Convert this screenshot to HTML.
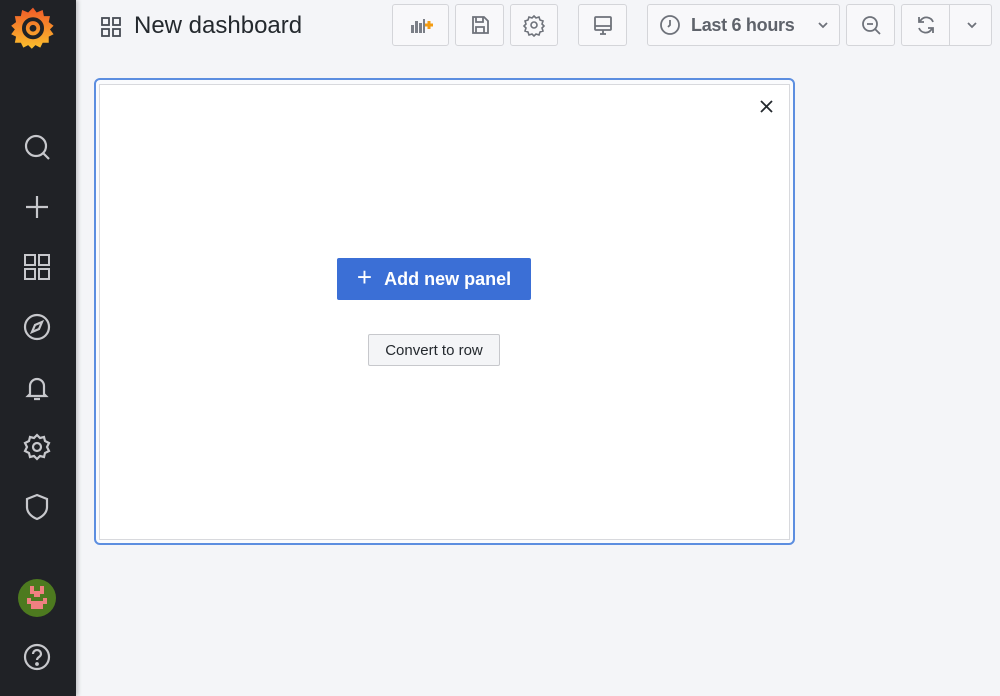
<!DOCTYPE html><html><head><style>
body{margin:0;width:1000px;height:696px;background:#f4f5f8;font-family:"Liberation Sans",sans-serif;position:relative;overflow:hidden}
.sb{position:absolute;left:0;top:0;width:76px;height:696px;background:#202226;box-shadow:2px 0 4px rgba(0,0,0,.2)}
.ic{position:absolute;left:18px;width:38px;height:38px}
.btn{position:absolute;top:4px;height:42px;border:1px solid #d4d5d9;border-radius:3px;background:#f8f8fa;box-sizing:border-box;display:flex;align-items:center;justify-content:center}
.btn svg{width:24px;height:24px}
</style></head><body>
<div class="sb">
<svg style="position:absolute;left:10px;top:4px" width="46" height="46" viewBox="0 0 38 38"><defs><linearGradient id="g" x1="0" y1="1" x2="0" y2="0"><stop offset="0" stop-color="#fbc02d"/><stop offset="1" stop-color="#f05a28"/></linearGradient></defs>
<path fill="url(#g)" d="M19 3l3 4 5-2 1 5 5 0-1 5 4 3-3 3 3 4-4 2 0 5-5 0-2 4-4-2-3 3-3-3-4 2-2-4-5 0 1-5-4-2 3-4-3-3 4-3-1-5 5 0 1-5 5 2z"/>
<circle cx="19" cy="20" r="7.5" fill="none" stroke="#202226" stroke-width="3.2"/><circle cx="19" cy="20" r="2.8" fill="#202226"/></svg>
<svg class="ic" style="top:128px" viewBox="0 0 38 38" fill="none" stroke="#c7c8cc" stroke-width="2.2"><circle cx="18" cy="18" r="10"/><path d="M25 25l6 6"/></svg>
<svg class="ic" style="top:188px" viewBox="0 0 38 38" fill="none" stroke="#c7c8cc" stroke-width="2.2"><path d="M19 8v22M8 19h22"/></svg>
<svg class="ic" style="top:248px" viewBox="0 0 38 38" fill="none" stroke="#c7c8cc" stroke-width="2"><rect x="7" y="7" width="10" height="10"/><rect x="21" y="7" width="10" height="10"/><rect x="7" y="21" width="10" height="10"/><rect x="21" y="21" width="10" height="10"/></svg>
<svg class="ic" style="top:308px" viewBox="0 0 38 38" fill="none" stroke="#c7c8cc" stroke-width="2.2"><circle cx="19" cy="19" r="12"/><path d="M24 14l-3 7-7 3 3-7z"/></svg>
<svg class="ic" style="top:368px" viewBox="0 0 38 38" fill="none" stroke="#c7c8cc" stroke-width="2.2"><path d="M12 26V18a7 7 0 0114 0v8l2 2H10zM16 31h6"/></svg>
<svg class="ic" style="top:428px" viewBox="0 0 38 38" fill="none" stroke="#c7c8cc" stroke-width="2.2"><circle cx="19" cy="19" r="4"/><path d="M19 7l3 3 4-1 1 4 4 2-2 4 2 4-4 2-1 4-4-1-3 3-3-3-4 1-1-4-4-2 2-4-2-4 4-2 1-4 4 1z"/></svg>
<svg class="ic" style="top:488px" viewBox="0 0 38 38" fill="none" stroke="#c7c8cc" stroke-width="2.2"><path d="M19 7l10 4v8c0 6-5 10-10 12-5-2-10-6-10-12v-8z"/></svg>
<svg class="ic" style="top:579px" viewBox="0 0 38 38"><circle cx="19" cy="19" r="19" fill="#4d7a1f"/><path fill="#f08080" d="M12 7h4v5h6V7h4v8h-4v3h-6v-3h-4zM9 19h4v3h12v-3h4v6h-4v5h-12v-5h-4zM16 24h6v2h-6z"/></svg>
<svg class="ic" style="top:638px" viewBox="0 0 38 38" fill="none" stroke="#c7c8cc" stroke-width="2.2"><circle cx="19" cy="19" r="12"/><path d="M15 16a4 4 0 118 0c0 3-4 3-4 6"/><circle cx="19" cy="26" r=".8" fill="#c7c8cc"/></svg>
</div>
<svg style="position:absolute;left:100px;top:16px" width="22" height="22" viewBox="0 0 22 22" fill="none" stroke="#464c54" stroke-width="1.8"><rect x="2" y="2" width="7" height="7"/><rect x="13" y="2" width="7" height="7"/><rect x="2" y="13" width="7" height="7"/><rect x="13" y="13" width="7" height="7"/></svg>
<div style="position:absolute;left:134px;top:12px;font-size:24px;color:#24292e">New dashboard</div>
<div class="btn" style="left:392px;width:57px"><svg viewBox="0 0 24 24"><g fill="#7b7f87"><rect x="2" y="12" width="3" height="8"/><rect x="6" y="8" width="3" height="12"/><rect x="10" y="10" width="3" height="10"/><rect x="14" y="6" width="2" height="14"/></g><path d="M20 8v8M16 12h8" stroke="#f39c12" stroke-width="3"/></svg></div>
<div class="btn" style="left:455px;width:49px"><svg viewBox="0 0 24 24" fill="none" stroke="#6e727a" stroke-width="1.8"><path d="M5 4h11l4 4v12H5zM8 4v5h7V4M8 20v-6h8v6"/></svg></div>
<div class="btn" style="left:510px;width:48px"><svg viewBox="0 0 24 24" fill="none" stroke="#6e727a" stroke-width="1.6"><circle cx="12" cy="12" r="3"/><path d="M12 3l2 2 3-1 1 3 3 1-1 3 2 2-2 2 1 3-3 1-1 3-3-1-2 2-2-2-3 1-1-3-3-1 1-3-2-2 2-2-1-3 3-1 1-3 3 1z"/></svg></div>
<div class="btn" style="left:578px;width:49px"><svg viewBox="0 0 24 24" fill="none" stroke="#6e727a" stroke-width="1.8"><rect x="4" y="4" width="16" height="13" rx="1"/><path d="M4 13h16M9 21h6M12 17v4"/></svg></div>
<div class="btn" style="left:647px;width:193px;justify-content:flex-start;padding-left:10px"><svg viewBox="0 0 24 24" fill="none" stroke="#6e727a" stroke-width="1.8"><circle cx="12" cy="12" r="9"/><path d="M12 7v5l-2 2"/></svg><span style="font-size:18px;color:#5f636b;margin-left:9px;font-weight:bold;letter-spacing:-0.3px">Last 6 hours</span><svg style="position:absolute;right:8px;width:16px" viewBox="0 0 16 16" fill="none" stroke="#6e727a" stroke-width="1.8"><path d="M4 6l4 4 4-4"/></svg></div>
<div class="btn" style="left:846px;width:49px"><svg viewBox="0 0 24 24" fill="none" stroke="#6e727a" stroke-width="1.8"><circle cx="11" cy="11" r="7"/><path d="M16 16l5 5M8 11h6"/></svg></div>
<div class="btn" style="left:901px;width:91px;justify-content:flex-start"><div style="width:47px;height:40px;display:flex;align-items:center;justify-content:center;border-right:1px solid #d4d5d9"><svg viewBox="0 0 24 24" fill="none" stroke="#6e727a" stroke-width="1.8" width="24" height="24"><path d="M19 9a7 7 0 00-12-2L5 9M5 15a7 7 0 0012 2l2-2M5 4v5h5M19 20v-5h-5"/></svg></div><svg style="width:16px;margin-left:14px" viewBox="0 0 16 16" fill="none" stroke="#6e727a" stroke-width="1.8"><path d="M4 6l4 4 4-4"/></svg></div>
<div style="position:absolute;left:94px;top:78px;width:701px;height:467px;box-sizing:border-box;border:2px solid #5c8ee0;border-radius:6px;background:#fafbfd"></div>
<div style="position:absolute;left:99px;top:84px;width:691px;height:456px;box-sizing:border-box;border:1px solid #d8d9dd;background:#fff"></div>
<svg style="position:absolute;left:759px;top:99px" width="15" height="15" viewBox="0 0 15 15" stroke="#24292e" stroke-width="1.8"><path d="M2 2l11 11M13 2L2 13"/></svg>
<div style="position:absolute;left:337px;top:258px;width:194px;height:42px;background:#3b6fd6;border-radius:2px;color:#fff;font-size:18px;font-weight:bold;display:flex;align-items:center;justify-content:center"><span style="font-weight:normal;font-size:26px;margin-right:12px;margin-top:-3px">+</span>Add new panel</div>
<div style="position:absolute;left:368px;top:334px;width:132px;height:32px;box-sizing:border-box;border:1px solid #c7c8cc;border-radius:2px;background:#f4f5f7;font-size:15px;color:#24292e;display:flex;align-items:center;justify-content:center">Convert to row</div>
</body></html>
